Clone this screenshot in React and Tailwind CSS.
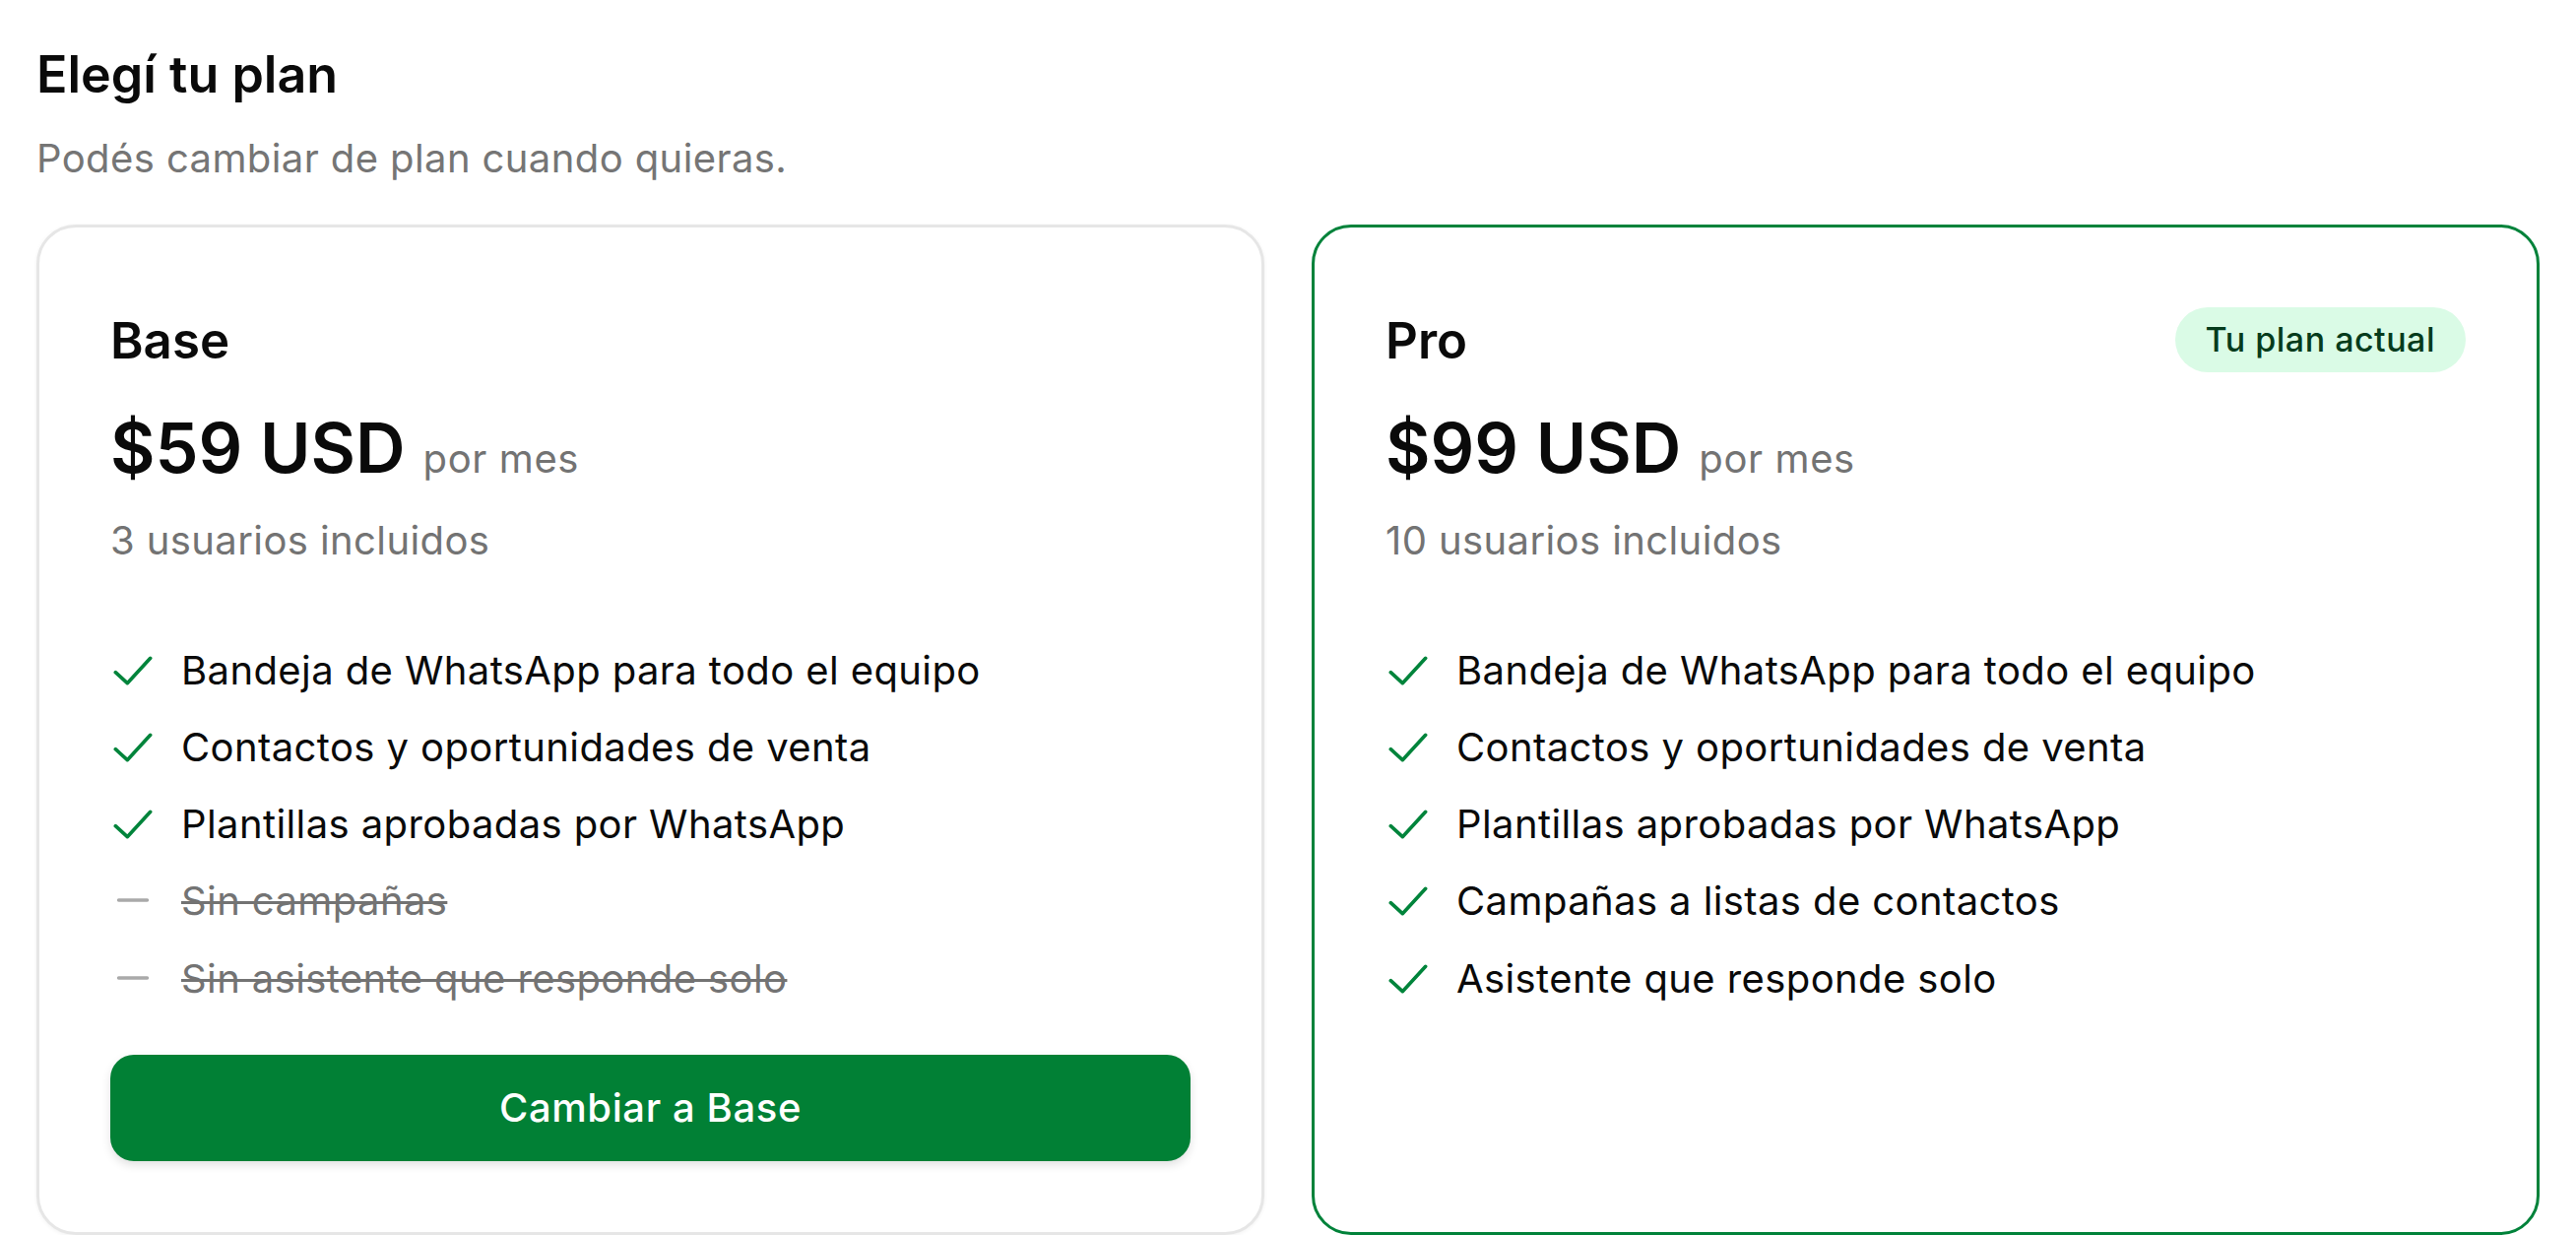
import React from "react";

function CheckIcon() {
  return (
    <svg width="44" height="30" viewBox="0 0 44 30" className="shrink-0" fill="none">
      <path d="M5.3 16.7 L17.3 27.7 L40.7 2.3" stroke="#00843b" strokeWidth="3.6" strokeLinecap="round" strokeLinejoin="round" />
    </svg>
  );
}

function DashIcon() {
  return (
    <svg width="44" height="30" viewBox="0 0 44 30" className="shrink-0" fill="none">
      <path d="M8.5 14 L37.5 14" stroke="#a9a9a9" strokeWidth="3.4" strokeLinecap="round" />
    </svg>
  );
}

function Feature({ text, included }) {
  return (
    <li className="flex items-center h-[60px]">
      {included ? <CheckIcon /> : <DashIcon />}
      <span
        className={
          "ml-[28px] text-[40px] leading-[60px] tracking-[0.4px] " +
          (included ? "text-[#0a0a0a]" : "text-[#737373] line-through decoration-[3px] decoration-[#737373]")
        }
      >
        {text}
      </span>
    </li>
  );
}

function Card({ name, price, users, features, current }) {
  return (
    <div
      className={
        "flex-1 rounded-[40px] border-[3px] bg-white p-[72px] flex flex-col " +
        (current ? "border-[#01823a]" : "border-[#e6e6e6] shadow-[0_1px_4px_rgba(0,0,0,0.06)]")
      }
    >
      <div className="flex items-center justify-between h-[84px]">
        <div className="text-[51px] leading-none font-semibold text-[#0a0a0a]">{name}</div>
        {current && (
          <div className="h-[66px] px-[31px] rounded-full bg-[#dafbe6] text-[#053b1c] text-[34px] tracking-[0.5px] font-medium flex items-center leading-none">
            Tu plan actual
          </div>
        )}
      </div>
      <div className="mt-[32.5px] flex items-baseline">
        <span className="text-[70px] leading-none font-semibold text-[#0a0a0a]">{price}</span>
        <span className="ml-[18px] text-[40px] leading-none tracking-[0.6px] text-[#737373]">por mes</span>
      </div>
      <div className="mt-[35px] text-[40px] leading-[48px] tracking-[0.4px] text-[#737373]">{users}</div>
      <ul className="mt-[78px] flex flex-col gap-[18.33px]">
        {features.map((f) => (
          <Feature key={f.text} text={f.text} included={f.included} />
        ))}
      </ul>
      {!current && (
        <button className="mt-[47px] h-[108px] w-full rounded-[24px] bg-[#018035] text-white text-[40px] tracking-[0.6px] font-medium shadow-[0_4px_10px_rgba(0,0,0,0.12)]">
          Cambiar a Base
        </button>
      )}
    </div>
  );
}

export default function App() {
  return (
    <div
      className="min-h-screen bg-white px-[37px] pt-[47px]"
      style={{ fontFamily: "Inter, 'Noto Sans', sans-serif" }}
    >
      <h1 className="text-[52px] leading-[58px] font-semibold text-[#0a0a0a]">Elegí tu plan</h1>
      <p className="mt-[31.5px] text-[40px] leading-[48px] tracking-[0.4px] text-[#757575]">Podés cambiar de plan cuando quieras.</p>
      <div className="mt-[43.5px] flex gap-[48px] items-stretch">
        <Card
          name="Base"
          price="$59 USD"
          users="3 usuarios incluidos"
          features={[
            { text: "Bandeja de WhatsApp para todo el equipo", included: true },
            { text: "Contactos y oportunidades de venta", included: true },
            { text: "Plantillas aprobadas por WhatsApp", included: true },
            { text: "Sin campañas", included: false },
            { text: "Sin asistente que responde solo", included: false },
          ]}
        />
        <Card
          name="Pro"
          price="$99 USD"
          users="10 usuarios incluidos"
          current
          features={[
            { text: "Bandeja de WhatsApp para todo el equipo", included: true },
            { text: "Contactos y oportunidades de venta", included: true },
            { text: "Plantillas aprobadas por WhatsApp", included: true },
            { text: "Campañas a listas de contactos", included: true },
            { text: "Asistente que responde solo", included: true },
          ]}
        />
      </div>
    </div>
  );
}
